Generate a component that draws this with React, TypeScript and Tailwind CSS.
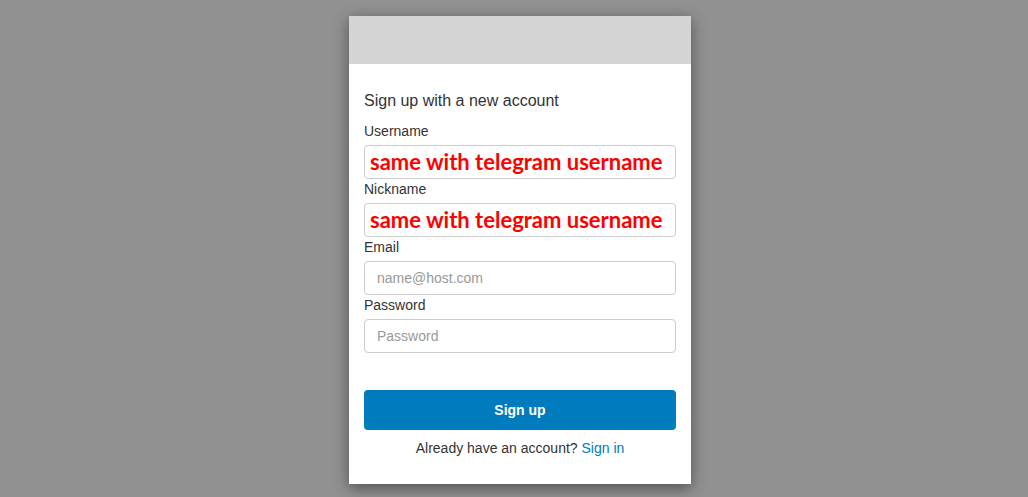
const fields = [
  { label: "Username", value: "same with telegram username", placeholder: "" },
  { label: "Nickname", value: "same with telegram username", placeholder: "" },
  { label: "Email", value: "", placeholder: "name@host.com" },
  { label: "Password", value: "", placeholder: "Password" },
];

export default function App() {
  return (
    <div className="flex min-h-[497px] w-full justify-center bg-[#919191] pt-4 pl-[12px] font-['Liberation_Sans',Arial,sans-serif]">
      <div className="h-fit w-[342px] bg-white shadow-[0_4px_14px_rgba(0,0,0,0.45)]">
        <div className="h-12 bg-[#d4d4d4]" />
        <div className="px-[15px] pt-[26px] pb-[26px]">
          <h1 className="text-[16px] leading-[22px] text-[#333]">Sign up with a new account</h1>
          <div className="mt-[9px]">
            {fields.map((f) => (
              <div key={f.label}>
                <label className="block text-[14px] leading-[20px] text-[#333]">{f.label}</label>
                <div className="mt-[4px] flex h-[34px] items-center rounded-[4px] border border-[#ccc] px-[12px]">
                  {f.value ? (
                    <span className="-ml-[7px] whitespace-nowrap font-['Lato',sans-serif] text-[22px] font-bold leading-none text-[#ff0000]">
                      {f.value}
                    </span>
                  ) : (
                    <span className="text-[14px] text-[#999]">{f.placeholder}</span>
                  )}
                </div>
              </div>
            ))}
          </div>
          <button className="mt-[37px] h-[40px] w-full rounded-[4px] bg-[#007bbd] text-[14px] font-bold text-white">
            Sign up
          </button>
          <p className="mt-[8px] text-center text-[14px] leading-[20px] text-[#333]">
            Already have an account? <span className="text-[#007bbd]">Sign in</span>
          </p>
        </div>
      </div>
    </div>
  );
}
